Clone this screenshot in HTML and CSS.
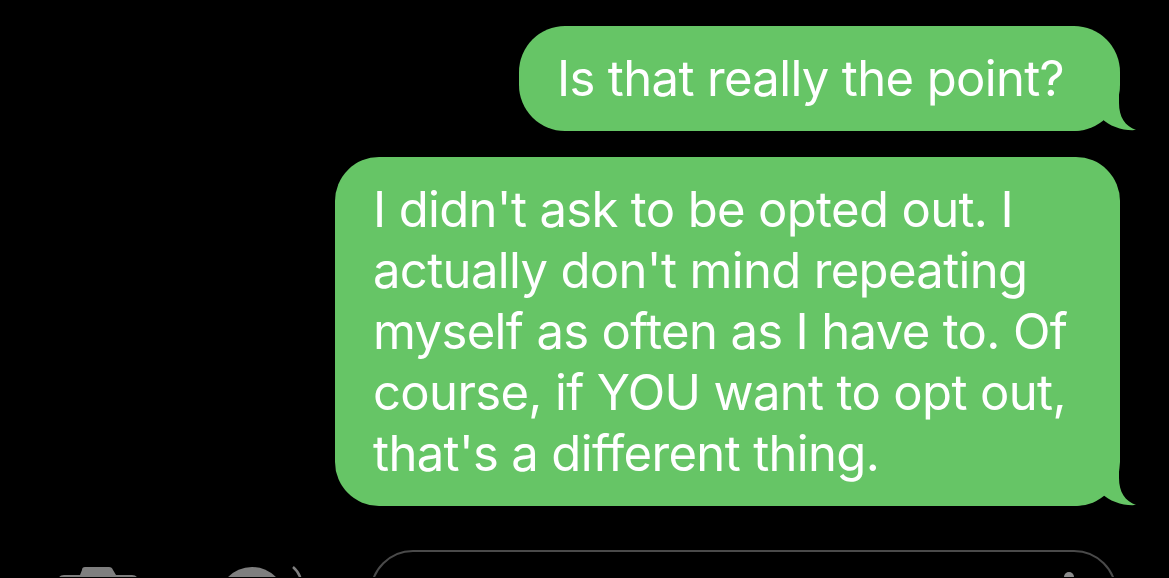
FILE: index.html
```html
<!DOCTYPE html>
<html lang="en">
<head>
<meta charset="utf-8">
<title>Messages</title>
<link rel="stylesheet" href="styles.css">
</head>
<body>
<main class="thread">
  <div class="bubble">
    <p class="text">Is that really the point?</p>
    <svg class="tail" width="65" height="50" viewBox="0 0 65 50"><path d="M0 50 L0 0 L47 0 L47 22 C47 36 53 45 64 49 C52 50 38 46 29 37 C24 44 14 50 0 50 Z"/></svg>
  </div>
  <div class="bubble bubble-long">
    <p class="text">I didn't ask to be opted out. I<br>actually don't mind repeating<br>myself as often as I have to. Of<br>course, if YOU want to opt out,<br>that's a different thing.</p>
    <svg class="tail" width="65" height="50" viewBox="0 0 65 50"><path d="M0 50 L0 0 L47 0 L47 22 C47 36 53 45 64 49 C52 50 38 46 29 37 C24 44 14 50 0 50 Z"/></svg>
  </div>
</main>
<footer class="composer">
  <svg class="camera" width="80" height="12" viewBox="0 0 80 12"><path d="M24 3 Q24 0 27 0 L51 0 Q54 0 55 3 L58 8 L74 8 Q80 8 80 14 L80 20 L0 20 L0 14 Q0 8 6 8 L22 8 Z"/></svg>
  <svg class="apps" width="90" height="14" viewBox="0 0 90 14"><ellipse cx="35" cy="38" rx="35" ry="37"/><path class="ring" d="M76 1 Q82 6 84 14" /></svg>
  <div class="field"><span class="mic"></span></div>
</footer>
</body>
</html>
```
FILE: styles.css
```css
html, body {
  margin: 0;
  padding: 0;
  background: #000;
  height: 578px;
  overflow: hidden;
}
body {
  font-family: Inter, "Noto Sans", sans-serif;
  color: #fff;
}
.thread {
  display: flex;
  flex-direction: column;
  align-items: flex-end;
  gap: 26px;
  padding: 26px 49px 0 0;
}
.bubble {
  position: relative;
  background: #66c566;
  border-radius: 46px;
  padding: 22px 40px 22px 38px;
  box-sizing: border-box;
  width: 601px;
}
.bubble-long {
  width: 785px;
  border-radius: 44px;
}
.text {
  margin: 0;
  font-size: 49px;
  line-height: 61px;
  white-space: nowrap;
  letter-spacing: -0.65px;
}
.tail {
  position: absolute;
  right: -17px;
  bottom: 0;
  fill: #66c566;
  display: block;
}
.composer {
  display: flex;
  align-items: flex-start;
  margin-top: 44px;
  padding-left: 58px;
  height: 27px;
  overflow: hidden;
}
.camera {
  display: block;
  fill: #7f7f7f;
  margin-top: 17px;
}
.apps {
  display: block;
  margin-left: 79px;
  margin-top: 16px;
}
.apps ellipse {
  fill: #7f7f7f;
}
.apps .ring {
  fill: none;
  stroke: #7f7f7f;
  stroke-width: 2.5;
}
.field {
  position: relative;
  flex: none;
  margin-left: 63px;
  width: 747px;
  height: 90px;
  box-sizing: border-box;
  border: 2.5px solid #4a4a4a;
  border-radius: 43px;
}
.mic {
  position: absolute;
  left: 692px;
  top: 20px;
  width: 10px;
  height: 10px;
  border-radius: 50%;
  background: #8c8c8c;
}
```
